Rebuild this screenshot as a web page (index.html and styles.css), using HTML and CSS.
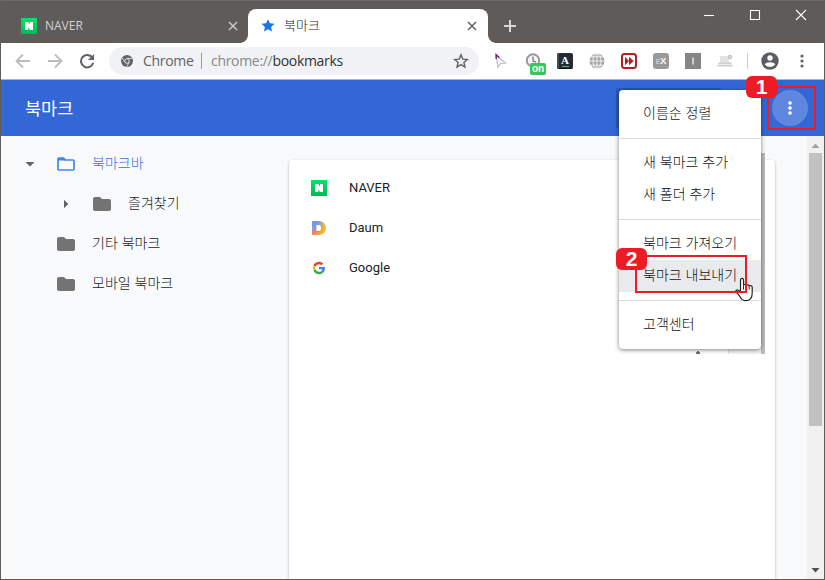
FILE: index.html
```html
<!DOCTYPE html>
<html lang="ko">
<head>
<meta charset="utf-8">
<title>북마크</title>
<link rel="stylesheet" href="styles.css">
</head>
<body>
<div class="window">
  <header class="tabstrip">
    <div class="tab">
      <svg class="favicon" viewBox="0 0 16 16"><defs><linearGradient id="ng" x1="0" y1="0" x2="0" y2="1"><stop offset="0" stop-color="#00e56a"/><stop offset="1" stop-color="#00b956"/></linearGradient></defs><rect width="16" height="16" fill="url(#ng)"/><path d="M4 4H7.200L9 6.800V4h3v8H9L7.200 9.200V12H4z" fill="#fff"/></svg>
      <span class="tab-label">NAVER</span>
      <svg class="tab-close" viewBox="0 0 10 10"><path d="M1 1l8 8M9 1L1 9"/></svg>
    </div>
    <div class="tab active">
      <svg class="favicon" viewBox="0 0 16 16"><path d="M7 1.200l1.900 4.100 4.600.5-3.400 3.100.9 4.600L7 11.200l-4 2.300.9-4.600L.5 5.800l4.600-.5z" fill="#1a73e8"/></svg>
      <span class="tab-label ko">북마크</span>
      <svg class="tab-close" viewBox="0 0 10 10"><path d="M1 1l8 8M9 1L1 9"/></svg>
    </div>
    <svg class="new-tab" viewBox="0 0 12 12"><path d="M6 0v12M0 6h12"/></svg>
    <div class="controls">
      <svg viewBox="0 0 12 12"><path d="M1 6.500h10"/></svg>
      <svg viewBox="0 0 12 12"><path d="M1.500 1.500h9v9h-9z"/></svg>
      <svg viewBox="0 0 12 12"><path d="M1 1l10 10M11 1L1 11"/></svg>
    </div>
  </header>

  <div class="toolbar">
    <div class="nav">
      <svg viewBox="0 0 16 16" class="dim"><path d="M15 8H2M8 1.500L1.500 8 8 14.500"/></svg>
      <svg viewBox="0 0 16 16" class="dim"><path d="M1 8h13M8 1.500L14.500 8 8 14.500"/></svg>
      <svg viewBox="0 0 16 16"><path d="M13.300 4.600A6.200 6.200 0 1 0 14.200 9.800"/><path d="M15 1v6H9z" fill="#5f6368" stroke="none"/></svg>
    </div>
    <div class="omnibox">
      <svg class="chrome-icon" viewBox="0 0 12 12"><circle cx="6" cy="6" r="6" fill="#5f6368"/><circle cx="6" cy="6" r="2.300" fill="#5f6368" stroke="#f1f3f4" stroke-width=".9"/><path d="M6 3.400h5.200M3.750 7.200L1.200 2.900M8.200 7.200L5.600 11.900" stroke="#f1f3f4" stroke-width=".8"/></svg>
      <span class="scheme">Chrome</span>
      <span class="bar"></span>
      <span class="url"><i>chrome://</i>bookmarks</span>
      <svg class="star" viewBox="0 0 16 16"><path d="M8 1.800l1.800 4.300 4.600.4-3.500 3 1.100 4.500L8 11.600 4 14l1.100-4.500-3.500-3 4.600-.4z"/></svg>
    </div>
    <div class="extensions">
      <svg viewBox="0 0 16 16"><path d="M3 2l9.500 8-5 .5L5 14z" fill="#fff" stroke="#bcbcbc" stroke-width="1.200"/><path d="M3.200 6V1.800L6.300 4.600" fill="none" stroke="#702a86" stroke-width="1.500"/></svg>
      <span class="clock"><svg viewBox="0 0 16 16"><circle cx="8" cy="7.500" r="6.200" fill="#f7f7f7" stroke="#999" stroke-width="2"/><path d="M8 3.500V8l3 1" stroke="#888" stroke-width="1.500" fill="none"/></svg><b>on</b></span>
      <span class="ext book">A</span>
      <svg viewBox="0 0 16 16"><circle cx="8" cy="8" r="7.500" fill="#a6a6a6"/><path d="M8 0v16M0 8h16M2 3.800h12M2 12.200h12" stroke="#fff" fill="none" stroke-width=".8"/><ellipse cx="8" cy="8" rx="4" ry="7.500" fill="none" stroke="#fff" stroke-width=".8"/></svg>
      <svg viewBox="0 0 16 16"><rect x="1" y="1" width="14" height="14" rx="2.500" fill="#fff" stroke="#b3201f" stroke-width="2"/><path d="M4 3.700L8 8l-4 4.300zM8 3.700L12.700 8 8 12.300z" fill="#b3201f"/></svg>
      <span class="ext ex"><i>E</i>X</span>
      <span class="ext bar-i"><svg viewBox="0 0 16 16"><path d="M8 4.500v7" stroke="#e6e6e6" stroke-width="1.500"/></svg></span>
      <svg viewBox="0 0 16 16"><path d="M3 3h9v7H3z" fill="#e3e3e3"/><path d="M1.500 9.500h13l1.300 4H0z" fill="#cfcfcf"/><path d="M1 11.500h14" stroke="#eee"/><circle cx="13" cy="4" r="1.800" fill="#ddd" stroke="#bbb"/></svg>
    </div>
    <span class="divider"></span>
    <svg class="avatar" viewBox="0 0 18 18"><circle cx="9" cy="9" r="8.700" fill="#5a5e63"/><circle cx="9" cy="6" r="2.700" fill="#fff"/><path d="M3.700 12.200C5.300 9.500 12.700 9.500 14.300 12.200 12 15.600 6 15.600 3.700 12.200z" fill="#fff"/></svg>
    <svg class="more" viewBox="0 0 4 14"><circle cx="2" cy="2" r="1.600"/><circle cx="2" cy="7" r="1.600"/><circle cx="2" cy="12" r="1.600"/></svg>
  </div>

  <div class="app-bar">
    <h1>북마크</h1>
    <button class="menu-button" aria-label="메뉴"><svg viewBox="0 0 4 14"><circle cx="2" cy="2" r="1.800"/><circle cx="2" cy="7" r="1.800"/><circle cx="2" cy="12" r="1.800"/></svg></button>
  </div>

  <main class="content">
    <nav class="tree">
      <div class="node current">
        <svg class="arrow" viewBox="0 0 10 10"><path d="M.5 3h9L5 7.500z"/></svg>
        <svg class="folder" viewBox="0 0 18 14"><path d="M2 1h4.500l2 2H16q1 0 1 1v8q0 1-1 1H2q-1 0-1-1V2q0-1 1-1z" fill="none" stroke="#4285f4" stroke-width="1.700"/><path d="M1 1h5.500l2 2.500H1z" fill="#4285f4"/></svg>
        <span>북마크바</span>
      </div>
      <div class="node child">
        <svg class="arrow" viewBox="0 0 10 10"><path d="M3 .8v8.400L7.300 5z"/></svg>
        <svg class="folder" viewBox="0 0 18 14"><path d="M2 0h5l2 2h7q2 0 2 2v8q0 2-2 2H2q-2 0-2-2V2Q0 0 2 0z"/></svg>
        <span>즐겨찾기</span>
      </div>
      <div class="node">
        <span class="arrow"></span>
        <svg class="folder" viewBox="0 0 18 14"><path d="M2 0h5l2 2h7q2 0 2 2v8q0 2-2 2H2q-2 0-2-2V2Q0 0 2 0z"/></svg>
        <span>기타 북마크</span>
      </div>
      <div class="node">
        <span class="arrow"></span>
        <svg class="folder" viewBox="0 0 18 14"><path d="M2 0h5l2 2h7q2 0 2 2v8q0 2-2 2H2q-2 0-2-2V2Q0 0 2 0z"/></svg>
        <span>모바일 북마크</span>
      </div>
    </nav>
    <section class="card">
      <div class="row"><svg viewBox="0 0 16 16"><rect width="16" height="16" fill="url(#ng)"/><path d="M4 4H7.200L9 6.800V4h3v8H9L7.200 9.200V12H4z" fill="#fff"/></svg><span>NAVER</span></div>
      <div class="row"><svg viewBox="0 0 16 16"><defs><linearGradient id="dg" x1=".25" y1="0" x2=".65" y2="1"><stop offset="0" stop-color="#6c99f0"/><stop offset=".4" stop-color="#8b9bd8"/><stop offset=".65" stop-color="#ec7b6b"/><stop offset="1" stop-color="#f6bd25"/></linearGradient><linearGradient id="dy" x1="0" x2="1"><stop offset=".45" stop-color="#f6c51d" stop-opacity="0"/><stop offset="1" stop-color="#f6c51d"/></linearGradient></defs><path fill-rule="evenodd" d="M1 1h6.500c4.500 0 7.200 3 7.200 7s-2.700 7-7.200 7H1zM5.500 5v6h2c1.700 0 2.800-1.200 2.800-3S9.200 5 7.500 5z" fill="url(#dg)"/><path fill-rule="evenodd" d="M1 1h6.500c4.500 0 7.200 3 7.200 7s-2.700 7-7.200 7H1zM5.500 5v6h2c1.700 0 2.800-1.200 2.800-3S9.200 5 7.500 5z" fill="url(#dy)"/></svg><span>Daum</span></div>
      <div class="row"><svg viewBox="-7 -7 62 62"><path fill="#ea4335" d="M24 9.500c3.540 0 6.710 1.220 9.210 3.600l6.850-6.850C35.900 2.380 30.470 0 24 0 14.620 0 6.510 5.380 2.560 13.220l7.980 6.190C12.430 13.720 17.740 9.500 24 9.500z"/><path fill="#4285f4" d="M46.980 24.550c0-1.570-.15-3.090-.38-4.550H24v9.020h12.940c-.58 2.960-2.260 5.480-4.780 7.180l7.730 6c4.510-4.180 7.090-10.360 7.090-17.650z"/><path fill="#fbbc05" d="M10.530 28.590a14.500 14.500 0 0 1 0-9.180l-7.980-6.190a24 24 0 0 0 0 21.560z"/><path fill="#34a853" d="M24 48c6.480 0 11.930-2.130 15.890-5.810l-7.730-6c-2.150 1.450-4.920 2.300-8.160 2.300-6.260 0-11.570-4.220-13.470-9.910l-7.980 6.190C6.510 42.620 14.620 48 24 48z"/></svg><span>Google</span></div>
    </section>
    <div class="scrollbar">
      <svg viewBox="0 0 9 5"><path d="M.5 5L4.500.5 8.500 5z" fill="#a3a3a3"/></svg>
      <div class="thumb"></div>
      <svg viewBox="0 0 9 5"><path d="M.5 0L4.500 4.500 8.500 0z" fill="#505050"/></svg>
    </div>
  </main>
</div>

<div class="menu-backdrop"></div>
<div class="menu-edge"></div>
<div class="menu-foot"></div>
<div class="menu">
  <div class="item">이름순 정렬</div>
  <hr>
  <div class="item">새 북마크 추가</div>
  <div class="item">새 폴더 추가</div>
  <hr>
  <div class="item">북마크 가져오기</div>
  <div class="item hover">북마크 내보내기</div>
  <hr>
  <div class="item">고객센터</div>
</div>

<svg class="hand" viewBox="0 0 20 26"><path d="M5.500 14V3C5.500.9 8.500.9 8.500 3V8.500c0-1.500 2.900-1.500 2.900.3 0-1.500 2.800-1.200 2.800.6 0-1.400 3-1 3 .8V16c0 5-2.200 7.700-6.200 7.700-3.400 0-4.800-1.500-6.300-4.500L1.100 15c-.8-1.700.9-2.600 2.200-1.500z" fill="#fff" stroke="#222" stroke-width="1.200"/><path d="M8.500 8.500v4M11.400 9v3M14.200 9.500v3" stroke="#222" fill="none"/></svg>
<div class="mark mark-one"></div>
<div class="mark mark-two"></div>
<div class="step step-one">1</div>
<div class="step step-two">2</div>
</body>
</html>
```
FILE: styles.css
```css
* { box-sizing: border-box; }
body {
  margin: 0;
  width: 825px;
  height: 580px;
  overflow: hidden;
  position: relative;
  font-family: "Noto Sans CJK KR", sans-serif;
  color: #333;
}
svg { display: block; flex: none; }
i { font-style: normal; }

.window {
  display: flex;
  flex-direction: column;
  width: 825px;
  height: 580px;
  border: 1px solid #5f5b58;
  border-top: 0;
  background: #fff;
}

.tabstrip {
  display: flex;
  height: 43px;
  background: #5f5b58;
  border-top: 1px solid #6d6965;
  flex: none;
}
.tab {
  display: flex;
  align-items: center;
  position: relative;
  width: 240px;
  height: 34px;
  margin-top: 8px;
  padding: 0 15px 0 13px;
  color: #d3d1cf;
  font: 12px "Open Sans", sans-serif;
}
.tab:first-child { width: 247px; padding: 0 10px 0 20px; }
.favicon { width: 16px; height: 16px; }
.tab-label { flex: 1; margin-left: 8px; position: relative; top: -1px; }
.tab-label.ko { font: 300 13px "Noto Sans CJK KR", sans-serif; color: #222; top: -2px; left: -1px; }
.tab-close { width: 10px; height: 10px; fill: none; stroke: #c9c7c5; stroke-width: 1.5; }
.tab.active { background: #fff; border-radius: 8px 8px 0 0; padding-right: 11px; }
.active .tab-close { stroke: #5f6368; }
.tab.active::before, .tab.active::after {
  content: "";
  position: absolute;
  bottom: 0;
  width: 8px;
  height: 8px;
}
.tab.active::before { left: -8px; background: radial-gradient(circle at 0 0, #5f5b58 7.500px, #fff 8.200px); }
.tab.active::after { right: -8px; background: radial-gradient(circle at 100% 0, #5f5b58 7.500px, #fff 8.200px); }
.new-tab { width: 12px; height: 12px; margin: 19px 0 0 16px; stroke: #d9d8d7; stroke-width: 2; }
.controls { display: flex; gap: 34px; margin: 8px 17px 0 auto; }
.controls svg { width: 12px; height: 12px; fill: none; stroke: #fff; stroke-width: 1.100; }

.toolbar {
  display: flex;
  align-items: center;
  height: 37px;
  flex: none;
  border-bottom: 1px solid #b4b4b4;
  padding-left: 14px;
}
.nav { display: flex; gap: 16px; }
.nav svg { width: 16px; height: 16px; fill: none; stroke: #5f6368; stroke-width: 2; }
.nav .dim { stroke: #bcbcbc; stroke-width: 1.800; }
.omnibox {
  display: flex;
  align-items: center;
  width: 370px;
  height: 28px;
  margin-left: 14px;
  padding: 0 10px 0 12px;
  border-radius: 14px;
  background: #f1f2f5;
  font: 14px/20px "Open Sans", sans-serif;
  color: #5f6368;
}
.chrome-icon { width: 12px; height: 12px; }
.scheme { width: 50px; margin-left: 10px; letter-spacing: -0.300px; white-space: nowrap; }
.bar { width: 1px; height: 16px; margin: 0 9px 0 8px; background: #9a9da1; }
.url { flex: 1; color: #303134; letter-spacing: -0.310px; white-space: nowrap; }
.url i { color: #85888c; }
.star { width: 16px; height: 16px; fill: none; stroke: #5f6368; stroke-width: 1.400; }
.extensions { display: flex; gap: 16px; margin-left: 14px; }
.extensions > * { width: 16px; height: 16px; }
.clock { position: relative; }
.clock b {
  position: absolute;
  left: 5px;
  top: 10px;
  width: 16px;
  height: 12px;
  border-radius: 2px;
  background: #35c759;
  color: #fff;
  font: bold 10px/11px "Liberation Sans", sans-serif;
  text-align: center;
}
.ext { border-radius: 2px; color: #fff; text-align: center; }
.book { background: #252a38; font: bold 11px/14px "Liberation Serif", serif; border-bottom: 1px solid #111; box-shadow: inset 2px 0 #454a57; }
.book::after { content: ""; display: block; width: 7px; height: 1px; margin: -1px auto 0; background: #41bd48; }
.ex { background: #999; border-radius: 3px; font: bold 9px/16px "Liberation Sans", sans-serif; }
.ex i { color: #ccc; font-size: 7px; }
.bar-i { background: #858585; border-radius: 0; }
.divider { width: 1px; height: 16px; margin: 0 13px 0 14px; background: #cfcfcf; }
.avatar { width: 18px; height: 18px; }
.more { width: 4px; height: 14px; margin-left: 21px; fill: #5f6368; }

.app-bar {
  display: flex;
  align-items: center;
  justify-content: space-between;
  height: 56px;
  flex: none;
  padding: 0 16px 0 24px;
  background: #3367d6;
  color: #fff;
}
h1 { margin: 0; font-size: 17.5px; line-height: 26px; font-weight: 400; }
.menu-button {
  display: grid;
  place-items: center;
  width: 36px;
  height: 36px;
  padding: 0;
  border: 0;
  border-radius: 50%;
  background: #6087df;
}
.menu-button svg { width: 4px; height: 14px; fill: #fff; }

.content { display: flex; flex: 1; min-height: 0; background: #f8f9fb; }
.tree { width: 288px; padding-top: 8px; font-size: 14px; font-weight: 300; }
.node { display: flex; align-items: center; height: 40px; padding-left: 24px; color: #222; }
.node.child { padding-left: 60px; }
.node.current { color: #2f75e6; }
.node > span:last-child { margin-left: 17px; position: relative; top: -2px; }
.arrow { width: 10px; height: 10px; fill: #5f6368; }
.folder { width: 18px; height: 14px; margin-left: 22px; fill: #737373; }
.card {
  width: 486px;
  margin-top: 24px;
  padding-top: 8px;
  border-radius: 4px 4px 0 0;
  background: #fff;
  box-shadow: 0 1px 3px rgba(0, 0, 0, .3);
  clip-path: inset(-4px -4px 0 -4px);
}
.row { display: flex; align-items: center; height: 40px; padding-left: 22px; gap: 22px; font: 13px Roboto, sans-serif; color: #222; }
.row svg { width: 16px; height: 16px; }
.row span { position: relative; top: -1px; }
.scrollbar {
  display: flex;
  flex-direction: column;
  align-items: center;
  width: 17px;
  margin-left: auto;
  padding: 7px 0 6px;
  background: #f1f1f1;
}
.scrollbar svg { width: 9px; height: 5px; }
.thumb { width: 13px; height: 273px; margin: 5px 0 auto; background: #c1c1c1; }

.menu-backdrop { position: absolute; left: 616px; top: 88px; width: 105px; height: 40px; background: #2b57b5; }
.menu-edge { position: absolute; left: 761px; top: 153px; width: 4px; height: 201px; background: #bcbcbc; }
.menu-foot { position: absolute; left: 616px; top: 345px; width: 145px; height: 9px; background: radial-gradient(circle at 82px 8px, #666 1.500px, transparent 2px), linear-gradient(90deg, #fff 112px, #ddd 112px, #ddd 113px, #f4f4f4 113px); }
.menu {
  position: absolute;
  left: 619px;
  top: 90px;
  width: 142px;
  height: 259px;
  padding: 8px 0;
  border-radius: 4px;
  background: #fff;
  box-shadow: 0 1px 4px rgba(0, 0, 0, .5);
  color: #111;
  font-size: 14px;
  font-weight: 300;
}
.item { height: 32px; padding-left: 24px; line-height: 29px; white-space: nowrap; }
.item.hover { background: #e8eaed; }
hr { height: 1px; margin: 8px 0; border: 0; background: #dcdcdc; }

.mark { position: absolute; border: 2px solid #ed1c24; }
.mark-one { left: 767px; top: 86px; width: 49px; height: 44px; }
.mark-two { left: 635px; top: 255px; width: 112px; height: 38px; }
.step {
  position: absolute;
  width: 31px;
  height: 22px;
  border-radius: 6px;
  background: #ed1c24;
  color: #fff;
  font: bold 21px/21px "Liberation Sans", sans-serif;
  text-align: center;
}
.step-one { left: 746px; top: 76px; }
.step-two { left: 616px; top: 248px; }
.hand { position: absolute; left: 735px; top: 277px; width: 20px; height: 26px; }
```
